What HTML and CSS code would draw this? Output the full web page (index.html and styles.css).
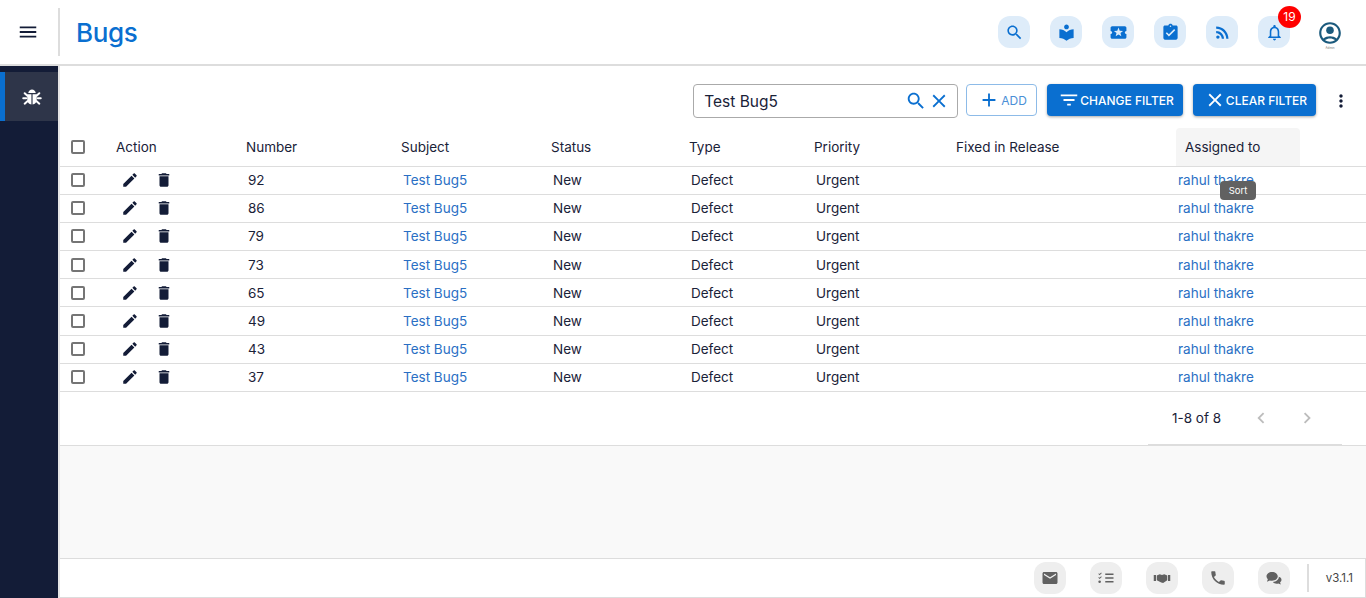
FILE: index.html
```html
<!DOCTYPE html>
<html lang="en">
<head>
    <meta charset="UTF-8">
    <meta name="viewport" content="width=device-width, initial-scale=1.0">
    <title>Bugs</title>
    <link rel="stylesheet" href="styles.css">
</head>
<body>
    <svg class="sprite" aria-hidden="true">
        <symbol id="i-menu" viewBox="0 0 24 24"><path d="M3 18h18v-2H3v2zm0-5h18v-2H3v2zm0-7v2h18V6H3z"/></symbol>
        <symbol id="i-search" viewBox="0 0 24 24"><path d="M15.5 14h-.79l-.28-.27C15.41 12.59 16 11.11 16 9.5 16 5.91 13.09 3 9.5 3S3 5.91 3 9.5 5.91 16 9.5 16c1.61 0 3.09-.59 4.23-1.57l.27.28v.79l5 4.99L20.49 19l-4.99-5zm-6 0C7.01 14 5 11.99 5 9.5S7.01 5 9.5 5 14 7.01 14 9.5 11.99 14 9.5 14z"/></symbol>
        <symbol id="i-library" viewBox="0 0 24 24"><path d="M12 11.55C9.64 9.35 6.48 8 3 8v11c3.48 0 6.64 1.35 9 3.55 2.36-2.19 5.52-3.55 9-3.55V8c-3.48 0-6.64 1.35-9 3.55zM12 8c1.66 0 3-1.34 3-3s-1.34-3-3-3-3 1.34-3 3 1.34 3 3 3z"/></symbol>
        <symbol id="i-ticket" viewBox="0 0 24 24"><path d="M20 12c0-1.1.9-2 2-2V6c0-1.1-.9-2-2-2H4c-1.1 0-1.99.9-1.99 2v4c1.1 0 1.99.9 1.99 2s-.89 2-2 2v4c0 1.1.9 2 2 2h16c1.1 0 2-.9 2-2v-4c-1.1 0-2-.9-2-2zm-4.42 4.8L12 14.5l-3.58 2.3 1.08-4.12-3.29-2.69 4.24-.25L12 5.8l1.54 3.95 4.24.25-3.29 2.69 1.09 4.11z"/></symbol>
        <symbol id="i-task" viewBox="0 0 24 24"><path d="M19 3h-4.18C14.4 1.84 13.3 1 12 1c-1.3 0-2.4.84-2.82 2H5c-1.1 0-2 .9-2 2v14c0 1.1.9 2 2 2h14c1.1 0 2-.9 2-2V5c0-1.1-.9-2-2-2zm-7 0c.55 0 1 .45 1 1s-.45 1-1 1-1-.45-1-1 .45-1 1-1zm-2 14l-4-4 1.41-1.41L10 14.17l6.59-6.59L18 9l-8 8z"/></symbol>
        <symbol id="i-rss" viewBox="0 0 24 24"><circle cx="6.18" cy="17.82" r="2.18"/><path d="M4 4.44v2.83c7.03 0 12.73 5.7 12.73 12.73h2.83c0-8.59-6.97-15.56-15.56-15.56zm0 5.66v2.83c3.9 0 7.07 3.17 7.07 7.07h2.83c0-5.47-4.43-9.9-9.9-9.9z"/></symbol>
        <symbol id="i-bell" viewBox="0 0 24 24"><path d="M12 22c1.1 0 2-.9 2-2h-4c0 1.1.9 2 2 2zm6-6v-5c0-3.07-1.63-5.64-4.5-6.32V4c0-.83-.67-1.5-1.5-1.5s-1.5.67-1.5 1.5v.68C7.64 5.36 6 7.92 6 11v5l-2 2v1h16v-1l-2-2zm-2 1H8v-6c0-2.48 1.51-4.5 4-4.5s4 2.02 4 4.5v6z"/></symbol>
        <symbol id="i-account" viewBox="0 0 24 24"><path d="M12 2C6.48 2 2 6.48 2 12s4.48 10 10 10 10-4.48 10-10S17.52 2 12 2zM7.35 18.5C8.66 17.56 10.26 17 12 17s3.34.56 4.65 1.5c-1.31.94-2.91 1.5-4.65 1.5s-3.34-.56-4.65-1.5zm10.79-1.38C16.45 15.8 14.32 15 12 15s-4.45.8-6.14 2.12C4.7 15.73 4 13.95 4 12c0-4.42 3.58-8 8-8s8 3.58 8 8c0 1.95-.7 3.73-1.86 5.12z"/><circle cx="12" cy="9.5" r="3.5"/></symbol>
        <symbol id="i-bug" viewBox="0 0 24 24"><path d="M7.5 7.2C8 4.6 9.8 3 12 3s4 1.6 4.500 4.200z"/><path d="M6.300 8.600h5v12.300c-3-.3-5-2.800-5-6zM12.700 8.600h5v6.300c0 3.200-2 5.700-5 6z"/><path d="M6.500 10.500L3.200 7.500M17.500 10.500l3.300-3M5 13.500H1.500M19 13.500h3.500M6.500 17l-3.300 3M17.500 17l3.300 3" fill="none" stroke="currentColor" stroke-width="2.400" stroke-linecap="round"/></symbol>
        <symbol id="i-edit" viewBox="0 0 24 24"><path d="M3 17.250V21h3.750L17.810 9.940l-3.750-3.750L3 17.250zM20.710 7.040c.39-.39.39-1.020 0-1.410l-2.340-2.340c-.39-.39-1.020-.39-1.410 0l-1.830 1.830 3.750 3.750 1.830-1.830z"/></symbol>
        <symbol id="i-delete" viewBox="0 0 24 24"><path d="M6 19c0 1.100.9 2 2 2h8c1.100 0 2-.9 2-2V7H6v12zM19 4h-3.500l-1-1h-5l-1 1H5v2h14V4z"/></symbol>
        <symbol id="i-add" viewBox="0 0 24 24"><path d="M19 13h-6v6h-2v-6H5v-2h6V5h2v6h6v2z"/></symbol>
        <symbol id="i-close" viewBox="0 0 24 24"><path d="M19 6.410L17.590 5 12 10.590 6.410 5 5 6.410 10.590 12 5 17.590 6.410 19 12 13.410 17.590 19 19 17.590 13.410 12z"/></symbol>
        <symbol id="i-filter" viewBox="0 0 24 24"><path d="M10 18h4v-2h-4v2zM3 6v2h18V6H3zm3 7h12v-2H6v2z"/></symbol>
        <symbol id="i-more" viewBox="0 0 24 24"><path d="M12 8c1.100 0 2-.9 2-2s-.9-2-2-2-2 .9-2 2 .9 2 2 2zm0 2c-1.100 0-2 .9-2 2s.9 2 2 2 2-.9 2-2-.9-2-2-2zm0 6c-1.100 0-2 .9-2 2s.9 2 2 2 2-.9 2-2-.9-2-2-2z"/></symbol>
        <symbol id="i-left" viewBox="0 0 24 24"><path d="M15.410 7.410L14 6l-6 6 6 6 1.410-1.410L10.830 12z"/></symbol>
        <symbol id="i-right" viewBox="0 0 24 24"><path d="M10 6L8.590 7.410 13.170 12l-4.580 4.590L10 18l6-6z"/></symbol>
        <symbol id="i-mail" viewBox="0 0 24 24"><path d="M20 4H4c-1.100 0-2 .9-2 2v12c0 1.100.9 2 2 2h16c1.100 0 2-.9 2-2V6c0-1.100-.9-2-2-2zm0 4l-8 5-8-5V6l8 5 8-5v2z"/></symbol>
        <symbol id="i-list" viewBox="0 0 24 24"><path d="M11 6h11v2H11zM11 11h11v2H11zM11 16h11v2H11zM3.500 8.300L1.800 6.600l.8-.8.9.9 2-2 .8.8zM3.500 13.300l-1.700-1.700.8-.8.9.9 2-2 .8.8z"/><circle cx="3.500" cy="17" r="1.700"/></symbol>
        <symbol id="i-shake" viewBox="0 0 24 24"><path d="M1 8h3v8H1zM20 8h3v8h-3zM5 8.500L9 7l3 1 3-1 4 1.500V15l-5.500 3.500L11 18l-6-3z"/></symbol>
        <symbol id="i-phone" viewBox="0 0 24 24"><path d="M6.620 10.790c1.440 2.830 3.760 5.140 6.590 6.590l2.200-2.200c.27-.27.67-.36 1.020-.24 1.120.37 2.330.57 3.570.57.55 0 1 .45 1 1V20c0 .55-.45 1-1 1-9.390 0-17-7.610-17-17 0-.55.45-1 1-1h3.500c.55 0 1 .45 1 1 0 1.250.2 2.450.57 3.570.11.35.03.74-.25 1.020l-2.200 2.200z"/></symbol>
        <symbol id="i-chat" viewBox="0 0 24 24"><path d="M9.500 4C5.400 4 2 6.500 2 9.800c0 1.500.7 2.800 1.800 3.800L2.600 17l3.900-1.700c1 .3 2 .4 3 .4 4.100 0 7.500-2.600 7.500-5.900S13.600 4 9.500 4z"/><path d="M18.300 9.200c.2.400.2.800.2 1.200 0 3.700-3.600 6.600-8 6.800 1.100 1.400 3 2.300 5.200 2.300.7 0 1.400-.1 2-.3l3.300 1.300-.9-2.800c1.200-.9 1.900-2.100 1.900-3.500 0-1.900-1.500-3.500-3.700-4z"/></symbol>
    </svg>

    <div class="app">
        <header class="topbar">
            <button class="menu-btn"><svg class="icon"><use href="#i-menu"/></svg></button>
            <h1 class="page-title">Bugs</h1>
            <div class="top-actions">
                <span class="top-icon"><svg class="icon"><use href="#i-search"/></svg></span>
                <span class="top-icon"><svg class="icon"><use href="#i-library"/></svg></span>
                <span class="top-icon"><svg class="icon"><use href="#i-ticket"/></svg></span>
                <span class="top-icon"><svg class="icon"><use href="#i-task"/></svg></span>
                <span class="top-icon"><svg class="icon"><use href="#i-rss"/></svg></span>
                <span class="top-icon">
                    <svg class="icon"><use href="#i-bell"/></svg>
                    <span class="badge">19</span>
                </span>
                <span class="profile">
                    <svg class="profile-icon"><use href="#i-account"/></svg>
                    <span class="profile-name">Admin</span>
                </span>
            </div>
        </header>

        <div class="body-row">
            <nav class="sidebar">
                <a class="side-item"><svg class="icon"><use href="#i-bug"/></svg></a>
            </nav>

            <div class="main">
                <section class="panel">
                    <div class="toolbar">
                        <div class="search-box">
                            <span class="search-text">Test Bug5</span>
                            <svg class="search-icon"><use href="#i-search"/></svg>
                            <svg class="search-icon"><use href="#i-close"/></svg>
                        </div>
                        <button class="btn-add"><svg class="btn-add-icon"><use href="#i-add"/></svg>ADD</button>
                        <button class="btn-primary"><svg class="btn-icon"><use href="#i-filter"/></svg>CHANGE FILTER</button>
                        <button class="btn-primary"><svg class="btn-icon"><use href="#i-close"/></svg>CLEAR FILTER</button>
                        <svg class="more-icon"><use href="#i-more"/></svg>
                    </div>

                    <table class="grid">
                        <colgroup>
                            <col class="c-check"><col class="c-action"><col class="c-number"><col class="c-subject"><col class="c-status"><col class="c-type"><col class="c-priority"><col class="c-fixed"><col class="c-assigned"><col>
                        </colgroup>
                        <thead>
                            <tr>
                                <th><span class="check"></span></th>
                                <th>Action</th>
                                <th>Number</th>
                                <th>Subject</th>
                                <th>Status</th>
                                <th>Type</th>
                                <th>Priority</th>
                                <th>Fixed in Release</th>
                                <th class="sorted">Assigned to<span class="tooltip">Sort</span></th>
                                <th></th>
                            </tr>
                        </thead>
                        <tbody id="rows">
                            <tr><td><span class="check"></span></td><td><span class="row-actions"><svg><use href="#i-edit"/></svg><svg><use href="#i-delete"/></svg></span></td><td>92</td><td><a>Test Bug5</a></td><td>New</td><td>Defect</td><td>Urgent</td><td></td><td><a>rahul thakre</a></td><td></td></tr>
                            <tr><td><span class="check"></span></td><td><span class="row-actions"><svg><use href="#i-edit"/></svg><svg><use href="#i-delete"/></svg></span></td><td>86</td><td><a>Test Bug5</a></td><td>New</td><td>Defect</td><td>Urgent</td><td></td><td><a>rahul thakre</a></td><td></td></tr>
                            <tr><td><span class="check"></span></td><td><span class="row-actions"><svg><use href="#i-edit"/></svg><svg><use href="#i-delete"/></svg></span></td><td>79</td><td><a>Test Bug5</a></td><td>New</td><td>Defect</td><td>Urgent</td><td></td><td><a>rahul thakre</a></td><td></td></tr>
                            <tr><td><span class="check"></span></td><td><span class="row-actions"><svg><use href="#i-edit"/></svg><svg><use href="#i-delete"/></svg></span></td><td>73</td><td><a>Test Bug5</a></td><td>New</td><td>Defect</td><td>Urgent</td><td></td><td><a>rahul thakre</a></td><td></td></tr>
                            <tr><td><span class="check"></span></td><td><span class="row-actions"><svg><use href="#i-edit"/></svg><svg><use href="#i-delete"/></svg></span></td><td>65</td><td><a>Test Bug5</a></td><td>New</td><td>Defect</td><td>Urgent</td><td></td><td><a>rahul thakre</a></td><td></td></tr>
                            <tr><td><span class="check"></span></td><td><span class="row-actions"><svg><use href="#i-edit"/></svg><svg><use href="#i-delete"/></svg></span></td><td>49</td><td><a>Test Bug5</a></td><td>New</td><td>Defect</td><td>Urgent</td><td></td><td><a>rahul thakre</a></td><td></td></tr>
                            <tr><td><span class="check"></span></td><td><span class="row-actions"><svg><use href="#i-edit"/></svg><svg><use href="#i-delete"/></svg></span></td><td>43</td><td><a>Test Bug5</a></td><td>New</td><td>Defect</td><td>Urgent</td><td></td><td><a>rahul thakre</a></td><td></td></tr>
                            <tr><td><span class="check"></span></td><td><span class="row-actions"><svg><use href="#i-edit"/></svg><svg><use href="#i-delete"/></svg></span></td><td>37</td><td><a>Test Bug5</a></td><td>New</td><td>Defect</td><td>Urgent</td><td></td><td><a>rahul thakre</a></td><td></td></tr>
                        </tbody>
                    </table>

                    <div class="pager">
                        <div class="pager-inner">
                            <span class="pager-text">1-8 of 8</span>
                            <svg class="pager-icon"><use href="#i-left"/></svg>
                            <svg class="pager-icon"><use href="#i-right"/></svg>
                        </div>
                    </div>
                </section>

                <div class="spacer"></div>

                <footer class="footer">
                    <span class="foot-icon"><svg><use href="#i-mail"/></svg></span>
                    <span class="foot-icon"><svg><use href="#i-list"/></svg></span>
                    <span class="foot-icon"><svg class="small"><use href="#i-shake"/></svg></span>
                    <span class="foot-icon"><svg><use href="#i-phone"/></svg></span>
                    <span class="foot-icon"><svg><use href="#i-chat"/></svg></span>
                    <span class="foot-divider"></span>
                    <span class="version">v3.1.1</span>
                </footer>
            </div>
        </div>
    </div>
</body>
</html>
```

FILE: styles.css
```css
* {
    box-sizing: border-box;
}

html, body {
    height: 100%;
}

body {
    margin: 0;
    font-family: Inter, "Open Sans", sans-serif;
    font-size: 13.5px;
    color: #1a2238;
    background: #fff;
    overflow: hidden;
}

svg {
    fill: currentColor;
    display: block;
}

.sprite {
    display: none;
}

.app {
    height: 598px;
    display: flex;
    flex-direction: column;
}

/* top bar */
.topbar {
    height: 66px;
    flex: none;
    display: flex;
    align-items: center;
    border-bottom: 2px solid #ddd;
    background: #fff;
}

.menu-btn {
    width: 60px;
    height: 48px;
    flex: none;
    margin: 0;
    padding: 0 0 0 0;
    border: none;
    border-right: 2px solid #ddd;
    background: none;
    color: #131c37;
    display: flex;
    align-items: center;
    padding-left: 17px;
}

.menu-btn .icon {
    width: 22px;
    height: 22px;
}

.page-title {
    margin: 0 0 0 16px;
    font-size: 26px;
    font-weight: 500;
    letter-spacing: -0.4px;
    color: #0a6fd0;
}

.top-actions {
    margin-left: auto;
    display: flex;
    align-items: center;
    gap: 20px;
    padding-right: 24px;
}

.top-icon {
    position: relative;
    width: 32px;
    height: 32px;
    border-radius: 12px;
    background: #deecf9;
    color: #0a6fd0;
    display: flex;
    align-items: center;
    justify-content: center;
}

.top-icon .icon {
    width: 19px;
    height: 19px;
}

.badge {
    position: absolute;
    top: -10px;
    left: 20px;
    width: 23px;
    height: 22px;
    border-radius: 50%;
    background: #f00;
    color: #fff;
    font-size: 12px;
    line-height: 22px;
    text-align: center;
}

.profile {
    width: 24px;
    margin-left: 8px;
    display: flex;
    flex-direction: column;
    align-items: center;
    color: #1b5a7d;
    margin-top: 6px;
}

.profile-icon {
    width: 26px;
    height: 26px;
    flex: none;
}

.profile-name {
    font-size: 3px;
    line-height: 4px;
    color: #777;
}

/* sidebar */
.body-row {
    flex: 1;
    min-height: 0;
    display: flex;
}

.sidebar {
    width: 58px;
    flex: none;
    padding-top: 6px;
    background: #131c37;
}

.side-item {
    height: 49px;
    display: flex;
    align-items: center;
    justify-content: center;
    background: #2e3549;
    border-left: 5px solid #0a6fd0;
    color: #fff;
}

.side-item .icon {
    width: 20px;
    height: 20px;
}

/* main column */
.main {
    flex: 1;
    min-width: 0;
    display: flex;
    flex-direction: column;
    border-left: 2px solid #e6e6e6;
}

.panel {
    height: 380px;
    flex: none;
    background: #fff;
    border-bottom: 1px solid #ddd;
}

.toolbar {
    height: 62px;
    padding: 18px 15px 0 0;
    display: flex;
    align-items: flex-start;
    justify-content: flex-end;
}

.search-box {
    width: 265px;
    height: 34px;
    margin-right: 8px;
    padding: 0 7px 0 10px;
    display: flex;
    align-items: center;
    gap: 1px;
    border: 1px solid #aaa;
    border-radius: 4px;
}

.search-text {
    flex: 1;
    font-size: 15.5px;
}

.search-icon {
    width: 22px;
    height: 22px;
    color: #0a6fd0;
}

.btn-add,
.btn-primary {
    height: 32px;
    display: flex;
    align-items: center;
    font-family: inherit;
    font-size: 12px;
    border-radius: 4px;
    padding: 0;
}

.btn-add {
    width: 71px;
    margin-right: 10px;
    padding-left: 11px;
    gap: 1px;
    background: #fff;
    color: #4b8fd6;
    border: 1px solid #8dbbe8;
}

.btn-add-icon {
    width: 22px;
    height: 22px;
    color: #0a6fd0;
}

.btn-primary {
    margin-right: 10px;
    padding: 0 9px 0 11px;
    background: #0a6fd0;
    color: #fff;
    border: none;
    font-weight: 500;
    box-shadow: 0 1px 3px rgba(0, 0, 0, 0.35);
}

.btn-icon {
    width: 22px;
    height: 22px;
}

.more-icon {
    width: 20px;
    height: 20px;
    margin: 7px 0 0 5px;
    color: #131c37;
}

/* table */
.grid {
    width: 100%;
    table-layout: fixed;
    border-collapse: collapse;
}

.c-check { width: 56px; }
.c-action { width: 130px; }
.c-number { width: 155px; }
.c-subject { width: 150px; }
.c-status { width: 138px; }
.c-type { width: 125px; }
.c-priority { width: 142px; }
.c-fixed { width: 220px; }
.c-assigned { width: 124px; }

.grid th {
    height: 38px;
    padding: 0 0 0 0;
    font-weight: 400;
    font-size: 13.5px;
    text-align: left;
    border-bottom: 1px solid #ddd;
}

.grid td {
    height: 28.2px;
    padding: 0 0 0 2px;
    border-bottom: 1px solid #ddd;
}

.grid td:first-child,
.grid th:first-child {
    padding: 0 0 0 11px;
}

.grid a {
    color: #2a6fc4;
}

.check {
    display: block;
    width: 14px;
    height: 14px;
    border: 2px solid #757575;
    border-radius: 2px;
}

.row-actions {
    display: flex;
    gap: 16px;
    padding-left: 3px;
    color: #131c37;
}

.row-actions svg {
    width: 18px;
    height: 18px;
}

.sorted {
    position: relative;
    padding-left: 9px !important;
    background: #f5f5f5;
    border-radius: 4px 4px 0 0;
}

/* hangs below the header cell, over the first row */
.tooltip {
    position: absolute;
    left: 44px;
    top: 53px;
    width: 36px;
    height: 19px;
    border-radius: 4px;
    background: #616161;
    color: #fff;
    font-size: 9.5px;
    line-height: 19px;
    text-align: center;
}

.pager {
    padding: 0 24px 0 0;
    display: flex;
    justify-content: flex-end;
}

.pager-inner {
    width: 194px;
    height: 54px;
    padding-left: 24px;
    display: flex;
    align-items: center;
    border-bottom: 2px solid #ddd;
}

.pager-text {
    width: 84px;
}

.pager-icon {
    width: 24px;
    height: 24px;
    margin-right: 24px;
    color: #bdbdbd;
}

.spacer {
    flex: 1;
    background: #f9f9f9;
}

/* footer */
.footer {
    height: 40px;
    flex: none;
    display: flex;
    align-items: center;
    justify-content: flex-end;
    gap: 24px;
    padding-right: 12px;
    background: #fff;
    border-top: 1px solid #ddd;
    border-right: 1px solid #ddd;
    border-bottom: 1px solid #ddd;
}

.foot-icon {
    width: 32px;
    height: 32px;
    border-radius: 12px;
    background: #eee;
    color: #616161;
    display: flex;
    align-items: center;
    justify-content: center;
}

.foot-icon svg {
    width: 18px;
    height: 18px;
}

.foot-divider {
    width: 2px;
    height: 28px;
    margin: 0 -7px 0 -7px;
    background: #ddd;
}

.version {
    font-size: 11.5px;
    color: #444;
}
```
